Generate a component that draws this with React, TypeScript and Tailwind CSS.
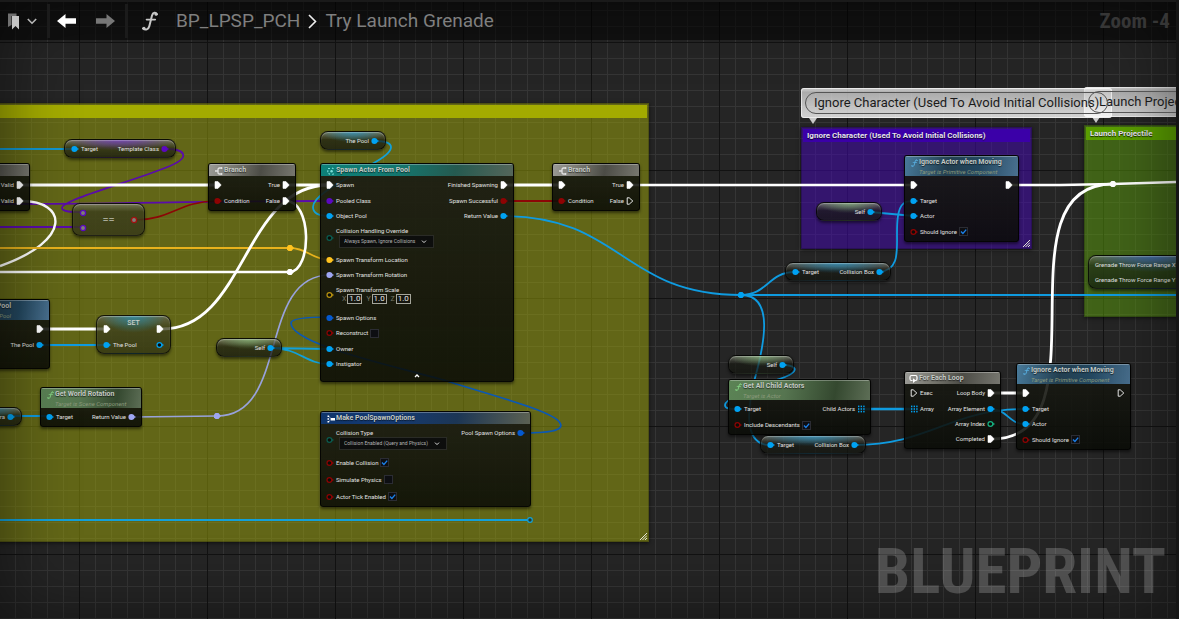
import React, { useId } from "react";

type Kind = "exec" | "execEmpty" | "data" | "ring" | "array" | "circle";

const BLUE = "text-[#00a2f2]";
const RED = "text-[#8e0303]";
const PURPLE = "text-[#5b08c0]";
const WHITE = "text-white";
const GOLD = "text-[#ffc21f]";
const LAVENDER = "text-[#9ea6f2]";
const TEAL = "text-[#0b5c50]";
const NAVY = "text-[#0559cf]";

function PinShape({ kind, color }: { kind: Kind; color: string }) {
  return (
    <svg viewBox="0 0 8 8" className={`h-2 w-2 shrink-0 overflow-visible ${color}`} aria-hidden="true">
      {kind === "exec" && <path d="M1 0.6h3L7.2 4 4 7.4H1z" fill="currentColor" stroke="currentColor" strokeWidth="0.6" strokeLinejoin="round" />}
      {kind === "execEmpty" && <path d="M1.2 0.8h2L6.8 4 3.200 7.200h-2z" fill="none" stroke="currentColor" strokeWidth="0.9" strokeLinejoin="round" />}
      {kind === "data" && (
        <>
          <circle cx="3.400" cy="4" r="3" fill="currentColor" />
          <path d="M6.200 2.600 7.900 4 6.200 5.400z" fill="currentColor" />
        </>
      )}
      {kind === "ring" && (
        <>
          <circle cx="3.400" cy="4" r="2.400" fill="#0b0d08" stroke="currentColor" strokeWidth="1.200" />
          <path d="M6.200 2.600 7.900 4 6.200 5.400z" fill="currentColor" />
        </>
      )}
      {kind === "circle" && <circle cx="4" cy="4" r="2.600" fill="#807f78" stroke="currentColor" strokeWidth="1.300" />}
      {kind === "array" &&
        [1, 3.6, 6.2].map((x) =>
          [1.4, 4, 6.6].map((y) => <rect key={`${x}-${y}`} x={x} y={y - 0.8} width="1.400" height="1.600" fill="currentColor" />)
        )}
    </svg>
  );
}

interface PinProps {
  kind: Kind;
  color?: string;
  label?: string;
  out?: boolean;
  size?: string;
  children?: React.ReactNode;
}

function Pin({ kind, color = WHITE, label, out, size = "h-4", children }: PinProps) {
  return (
    <div className={`flex items-center gap-0.5 whitespace-nowrap ${size} ${out ? "flex-row-reverse" : ""}`}>
      <PinShape kind={kind} color={color} />
      {label && <span>{label}</span>}
      {children}
    </div>
  );
}

function CheckPin({ label, on, size = "h-4" }: { label: string; on?: boolean; size?: string }) {
  const id = useId();
  return (
    <div className={`flex items-center gap-0.5 whitespace-nowrap ${size}`}>
      <PinShape kind="ring" color={RED} />
      <label htmlFor={id}>{label}</label>
      <span className="relative flex h-[9px] w-[9px]">
        <input id={id} type="checkbox" defaultChecked={on} className="peer h-full w-full appearance-none border border-[#2b2c33] bg-[#0d0e12]" />
        <svg viewBox="0 0 9 9" className="pointer-events-none absolute inset-0 hidden peer-checked:block" aria-hidden="true">
          <path d="M2 4.600 3.900 6.400 7.200 2.600" fill="none" stroke="#1b7fe8" strokeWidth="1.400" />
        </svg>
      </span>
    </div>
  );
}

function SelectPin({ label, value, width }: { label: string; value: string; width: string }) {
  const id = useId();
  return (
    <div className="flex h-[29px] items-center gap-0.5 whitespace-nowrap">
      <PinShape kind="ring" color={TEAL} />
      <div className="flex flex-col">
        <label htmlFor={id} className="leading-2">{label}</label>
        <span className={`relative ml-[3px] flex h-[13px] ${width}`}>
          <select id={id} className="h-full w-full appearance-none border border-[#2a2b26] bg-[#0d0e0d] pl-1 text-[5px] leading-[11px] text-[#b3b3b3]">
            <option>{value}</option>
          </select>
          <svg viewBox="0 0 8 8" className="pointer-events-none absolute top-[3px] right-1.5 h-2 w-2" aria-hidden="true">
            <path d="M2 2.600 4 4.600 6 2.600" fill="none" stroke="#ddd" strokeWidth="1" />
          </svg>
        </span>
      </div>
    </div>
  );
}

function VectorPin() {
  return (
    <div className="flex h-[29px] items-center gap-0.5 pb-1">
      <PinShape kind="ring" color="text-[#b8920f]" />
      <div className="flex flex-col">
        <span className="leading-2">Spawn Transform Scale</span>
        <span className="ml-1.5 flex gap-1">
          {["X", "Y", "Z"].map((axis) => (
            <label key={axis} className="flex items-center gap-px text-[7px] leading-[10px] text-[#77786a]">
              {axis}
              <input defaultValue="1.0" className="h-2.5 w-[15px] border border-[#a5a69b] bg-[#15160f] p-0 text-center text-[8px] leading-2 text-[#e6e6e6]" />
            </label>
          ))}
        </span>
      </div>
    </div>
  );
}

function FunctionGlyph({ className }: { className: string }) {
  return (
    <svg viewBox="0 0 16 20" className={className} aria-hidden="true">
      <path d="M15 3.200C13.800 1 10.900 1.300 10 4.600L7.300 15.200C6.500 18.400 3.500 19.600 1 17.500" fill="none" stroke="currentColor" strokeWidth="2" strokeLinecap="round" />
      <path d="M4.500 8.600h8.800" stroke="currentColor" strokeWidth="1.600" strokeLinecap="round" />
      <circle cx="14" cy="3.200" r="1.500" fill="currentColor" />
      <circle cx="2" cy="17.300" r="1.500" fill="currentColor" />
    </svg>
  );
}

function BranchGlyph() {
  return (
    <svg viewBox="0 0 8 8" className="h-2 w-2 shrink-0 text-[#e2e2e2]" aria-hidden="true">
      <path d="M0 4h3M7 1H4.500Q3 1 3 2.500v3Q3 7 4.500 7H7" fill="none" stroke="currentColor" strokeWidth="1.300" />
      <path d="M6 0 8 1 6 2.300zM6 5.700 8 7 6 8z" fill="currentColor" />
    </svg>
  );
}

function SpawnGlyph() {
  return (
    <svg viewBox="0 0 8 8" className="h-2 w-2 shrink-0 text-[#7fe0d8]" aria-hidden="true">
      <path d="M1 1.500h2M0.800 3.200v2M1.500 6.500l1.500.8M5 1l1.500.8M6.800 6.800l-1.500.6" stroke="currentColor" strokeWidth="1.100" />
      <circle cx="4.600" cy="4.200" r="1.200" fill="currentColor" />
    </svg>
  );
}

function MakeGlyph() {
  return (
    <svg viewBox="0 0 8 8" className="h-2 w-2 shrink-0 text-white" aria-hidden="true">
      <path d="M0.500 0.500h1.600v1.600H0.500zM0.500 3.200h1.600v1.600H0.500zM0.500 6h1.600v1.600H0.500zM4 3h4v2.400H4z" fill="currentColor" />
      <path d="M2 1.300 4 4 2 6.800" fill="none" stroke="currentColor" strokeWidth="0.500" />
    </svg>
  );
}

function LoopGlyph() {
  return (
    <svg viewBox="0 0 9 9" className="h-[9px] w-[9px] shrink-0 text-white" aria-hidden="true">
      <path d="M3.500 6.500H2.500Q1 6.500 1 5V3Q1 1.500 2.500 1.500h4Q8 1.500 8 3v2q0 1.500-1.500 1.500H5.500" fill="none" stroke="currentColor" strokeWidth="1.200" />
      <path d="M4 4.200 7 6.500 4 8.900z" fill="currentColor" />
    </svg>
  );
}

const HEAD = {
  gray: "bg-[linear-gradient(100deg,#9a9a96_0%,#77776f_30%,#4c4c46_60%,#77776f_100%)]",
  green: "bg-[linear-gradient(100deg,#5b8355_0%,#567550_40%,#34482f_75%,#5d6e56_100%)]",
  blue: "bg-[linear-gradient(100deg,#487a9a_0%,#233f50_38%,#23475f_65%,#4a7190_100%)]",
  teal: "bg-[linear-gradient(100deg,#0d8078_0%,#14776f_40%,#255a50_70%,#55665a_100%)]",
  navy: "bg-[linear-gradient(100deg,#0f356c_0%,#153a72_35%,#1c3655_65%,#5c6152_100%)]",
};

interface NodeProps {
  at: string;
  head: keyof typeof HEAD;
  title?: string;
  subtitle?: string;
  glyph?: React.ReactNode;
  headClass?: string;
  foot?: React.ReactNode;
  inputs?: React.ReactNode;
  outputs?: React.ReactNode;
}

function GraphNode({ at, head, title, subtitle, glyph, headClass = "pl-1.5", foot, inputs, outputs }: NodeProps) {
  return (
    <section className={`absolute overflow-hidden rounded-[3px] border border-black/80 bg-[linear-gradient(to_bottom,rgba(26,27,20,.9),rgba(10,12,7,.88))] shadow-[0_2px_3px_rgba(0,0,0,.5)] ${at}`}>
      <header className={`flex flex-col border-t border-white/30 ${subtitle ? "h-5" : "h-3"} ${HEAD[head]} ${headClass}`}>
        <div className="flex items-center gap-px">
          {glyph}
          <h2 className="text-[7px] leading-[11px] font-bold whitespace-nowrap text-[#c4c9c4] [text-shadow:0_1px_1px_rgba(0,0,0,.6)]">{title}</h2>
        </div>
        {subtitle && <p className="pl-2 text-[6px] leading-2 whitespace-nowrap text-[#8b9a7c] italic">{subtitle}</p>}
      </header>
      <div className="flex justify-between px-[5px] py-px">
        <div>{inputs}</div>
        <div>{outputs}</div>
      </div>
      {foot}
    </section>
  );
}

const GLOW = {
  blue: "bg-[radial-gradient(ellipse_50%_60%_at_50%_0%,rgba(40,150,200,.75),transparent),linear-gradient(to_bottom,rgba(120,122,110,.75),rgba(25,27,20,.7)_45%,rgba(20,22,16,.75))]",
  green: "bg-[radial-gradient(ellipse_50%_60%_at_50%_0%,rgba(140,200,130,.6),transparent),linear-gradient(to_bottom,rgba(120,122,110,.75),rgba(25,27,20,.7)_45%,rgba(20,22,16,.75))]",
  purple: "bg-[radial-gradient(ellipse_50%_60%_at_50%_0%,rgba(110,50,200,.75),transparent),linear-gradient(to_bottom,rgba(120,122,110,.75),rgba(45,47,25,.75)_45%,rgba(20,22,16,.75))]",
  navy: "bg-[radial-gradient(ellipse_50%_50%_at_50%_0%,rgba(50,100,190,.75),transparent),linear-gradient(to_bottom,rgba(120,122,110,.6),rgba(35,50,25,.7)_30%,rgba(20,32,16,.75))]",
  none: "bg-[linear-gradient(to_bottom,rgba(120,122,100,.75),rgba(58,60,28,.8)_25%,rgba(55,57,25,.85))]",
};

function Pill({ at, glow, children }: { at: string; glow: keyof typeof GLOW; children: React.ReactNode }) {
  return (
    <section className={`absolute flex items-center rounded-lg border border-black/70 px-1.5 shadow-[0_2px_3px_rgba(0,0,0,.5),inset_0_1px_1px_rgba(255,255,255,.3)] ${GLOW[glow]} ${at}`}>
      {children}
    </section>
  );
}

function Grip() {
  return (
    <svg viewBox="0 0 8 8" className="absolute right-px bottom-px h-2 w-2" aria-hidden="true">
      <path d="M1 8 8 1M3.500 8 8 3.500M6 8 8 6" stroke="#e6e6d8" strokeWidth="1" />
    </svg>
  );
}

interface CommentProps {
  at: string;
  body: string;
  bar: string;
  title?: string;
  grip?: boolean;
}

function CommentBox({ at, body, bar, title, grip }: CommentProps) {
  return (
    <section className={`absolute border border-black/20 p-px shadow-[0_1px_4px_rgba(0,0,0,.6)] ${body} ${at}`}>
      <h2 className={`h-[13px] overflow-hidden pl-1 text-[8px] leading-[14px] font-bold whitespace-nowrap text-[#e4e0ee] [text-shadow:0_1px_1px_rgba(0,0,0,.8)] ${bar}`}>{title}</h2>
      {grip && <Grip />}
    </section>
  );
}

function Bubble({ at, pad = "px-2", children }: { at: string; pad?: string; children: React.ReactNode }) {
  return (
    <div className={`absolute ${at}`}>
      <div className="rounded-[3px] bg-[linear-gradient(to_bottom,rgba(245,245,245,.8),rgba(205,205,205,.8)_15%,rgba(250,250,250,.8)_90%)] p-1 shadow-[inset_0_0_0_1px_rgba(255,255,255,.6)]">
        <p className={`relative z-10 h-[22px] rounded-full border border-[#555] text-[13px] leading-5 whitespace-nowrap text-[#1b1b1b] ${pad}`}>{children}</p>
      </div>
      <svg viewBox="0 0 8 6" className="ml-2 block h-1.5 w-2" aria-hidden="true">
        <path d="M0 0h8L4 6z" fill="#c9c9c9" />
      </svg>
    </div>
  );
}

const WIRES: { d: string; color: string; w?: number }[] = [
  { d: "M0 149H74", color: "#1296cf" },
  { d: "M166 149C184 149 194 157 165 168C130 182 62 200 62 208C62 212 72 212 82 212", color: "#5a0bab" },
  { d: "M0 204C120 204 200 201 330 201", color: "#5a0bab" },
  { d: "M0 227H82", color: "#5a0bab" },
  { d: "M135 220C170 220 180 201 217 201", color: "#8c0606", w: 1.6 },
  { d: "M22 201C66 201 74 240 0 266", color: "#fff", w: 2.4 },
  { d: "M22 185H217", color: "#fff", w: 2.8 },
  { d: "M0 248H290C308 248 312 260 330 260", color: "#e8b21c" },
  { d: "M0 272H290C312 270 312 201 286 201", color: "#fff", w: 2.6 },
  { d: "M286 185H329", color: "#fff", w: 2.8 },
  { d: "M162 329C246 329 243 185 329 185", color: "#fff", w: 2.8 },
  { d: "M42 329H107", color: "#fff", w: 2.8 },
  { d: "M40 345H107", color: "#0f9be0" },
  { d: "M12 416H50", color: "#0f9be0" },
  { d: "M132 417L217 416C290 416 257 275 330 275", color: "#98a2dc", w: 1.6 },
  { d: "M270 348L329 349M270 348C300 348 305 364 329 364", color: "#12a0d8" },
  { d: "M374 141C396 141 398 150 372 164C345 180 313 195 313 207C313 214 320 216 329 216", color: "#12a0d8" },
  { d: "M520 433C548 433 565 431 560 423C554 411 490 395 447 381C400 367 291 345 291 323C291 318 310 317 329 317", color: "#0b58b4", w: 1.7 },
  { d: "M0 520H529", color: "#12a0d8", w: 1.8 },
  { d: "M507 185H561", color: "#fff", w: 2.8 },
  { d: "M503 201H561", color: "#8c0606" },
  { d: "M503 216C622 216 622 295 741 295H1176", color: "#0f9be0", w: 1.8 },
  { d: "M632 185H913M1010 185H1060L1113 184L1176 182", color: "#fff", w: 2.6 },
  { d: "M741 295C768 295 768 272 795 272", color: "#0f9be0", w: 1.8 },
  { d: "M741 295C775 295 764 345 755 378C748 405 742 445 770 445", color: "#0f9be0" },
  { d: "M781 365C800 365 800 373 776 380C755 388 725 398 725 405C725 409 730 409 738 409", color: "#0f9be0" },
  { d: "M879 272C905 270 894 240 898 216C900 203 905 201 914 201", color: "#0f9be0", w: 1.8 },
  { d: "M870 212L914 216", color: "#0f9be0" },
  { d: "M862 409H912", color: "#0f9be0", w: 2.4 },
  { d: "M854 445C930 445 950 409 1025 409", color: "#0f9be0" },
  { d: "M990 409C1008 409 1008 424 1025 424", color: "#0f9be0" },
  { d: "M992 393H1025", color: "#fff", w: 2.8 },
  { d: "M992 439C1110 439 994 184 1113 184", color: "#fff", w: 2.8 },
];

const KNOTS = [
  { x: 290, y: 248, color: "#ffc21f" },
  { x: 290, y: 272, color: "#fff" },
  { x: 217, y: 416, color: "#9ea6f2" },
  { x: 741, y: 295, color: "#00a2f2" },
  { x: 1113, y: 184, color: "#fff" },
];

function Wires() {
  return (
    <svg viewBox="0 0 1179 619" className="absolute top-0 left-0 h-[619px] w-[1179px] max-w-none" aria-hidden="true">
      {WIRES.map((wire) => (
        <path key={wire.d} d={wire.d} fill="none" stroke={wire.color} strokeWidth={wire.w ?? 1.8} />
      ))}
      {KNOTS.map((k) => (
        <path key={`${k.x}-${k.y}`} d={`M${k.x - 3} ${k.y - 1.500}l1.500-1.500h3l2.500 3-2.500 3h-3l-1.500-1.500z`} fill={k.color} />
      ))}
      <circle cx="530" cy="520" r="2.300" fill="#273a2a" stroke="#12a0d8" strokeWidth="1.200" />
    </svg>
  );
}

function IgnoreActor({ at, wired }: { at: string; wired?: boolean }) {
  return (
    <GraphNode
      at={at}
      head="blue"
      title="Ignore Actor when Moving"
      subtitle="Target is Primitive Component"
      glyph={<FunctionGlyph className="h-2 w-[7px] text-[#5cb8ec]" />}
      inputs={
        <>
          <Pin kind="exec" />
          <Pin kind="data" color={BLUE} label="Target" />
          <Pin kind="data" color={BLUE} label="Actor" size="h-3.5" />
          <CheckPin label="Should Ignore" on size="h-[17px]" />
        </>
      }
      outputs={<Pin kind={wired ? "exec" : "execEmpty"} out />}
    />
  );
}

function Branch({ at, falseWired }: { at: string; falseWired?: boolean }) {
  return (
    <GraphNode
      at={at}
      head="gray"
      title="Branch"
      glyph={<BranchGlyph />}
      inputs={
        <>
          <Pin kind="exec" />
          <Pin kind="data" color={RED} label="Condition" />
        </>
      }
      outputs={
        <>
          <Pin kind="exec" out label="True" />
          <Pin kind={falseWired ? "exec" : "execEmpty"} out label="False" />
        </>
      }
    />
  );
}

function SelfPill({ at }: { at: string }) {
  return (
    <Pill at={`h-[19px] w-[66px] justify-end ${at}`} glow="green">
      <Pin kind="data" color={BLUE} label="Self" out />
    </Pill>
  );
}

function CollisionBoxPill({ at }: { at: string }) {
  return (
    <Pill at={`h-[19px] w-[106px] justify-between ${at}`} glow="blue">
      <Pin kind="data" color={BLUE} label="Target" />
      <Pin kind="data" color={BLUE} label="Collision Box" out />
    </Pill>
  );
}

function Graph() {
  return (
    <div className="absolute inset-0 overflow-hidden bg-[#252525] bg-[linear-gradient(to_right,#121212_1px,transparent_1px),linear-gradient(to_bottom,#121212_1px,transparent_1px),linear-gradient(to_right,#353535_1px,transparent_1px),linear-gradient(to_bottom,#353535_1px,transparent_1px)] bg-[size:128px_128px,128px_128px,16px_16px,16px_16px] bg-[position:79px_0,0_42px,15px_0,0_10px] text-[6px] leading-2 text-[#e2e2e2]">
      <CommentBox at="-left-5 top-[103px] h-[439px] w-[669px]" body="bg-[rgba(160,168,10,.5)]" bar="bg-[#a3ab00]" grip />
      <CommentBox at="left-[801px] top-[127px] h-[122px] w-[231px]" body="bg-[rgba(66,10,172,.55)]" bar="bg-[#3b00a8]" title="Ignore Character (Used To Avoid Initial Collisions)" grip />
      <CommentBox at="left-[1084px] top-[125px] h-[192px] w-[231px]" body="bg-[rgba(94,162,12,.5)]" bar="bg-[#5a9e00]" title="Launch Projectile" />
      <Wires />

      <GraphNode
        at="-left-16 top-[163px] w-[94px]"
        head="gray"
        outputs={
          <>
            <Pin kind="exec" out label="Valid" />
            <Pin kind="exec" out label="Valid" />
          </>
        }
      />
      <Pill at="left-[64px] top-[139px] h-[19px] w-28 justify-between" glow="purple">
        <Pin kind="data" color={BLUE} label="Target" />
        <Pin kind="data" color={PURPLE} label="Template Class" out />
      </Pill>
      <Pill at="left-[72px] top-[203px] h-[33px] w-[73px] justify-between" glow="none">
        <div>
          <Pin kind="circle" color={PURPLE} />
          <Pin kind="circle" color={PURPLE} size="h-3.5" />
        </div>
        <span className="text-[11px] leading-3 text-[#a9aa98]">==</span>
        <Pin kind="circle" color="text-[#a31010]" />
      </Pill>
      <Branch at="left-[208px] top-[163px] w-[88px]" falseWired />
      <Pill at="left-[320px] top-[131px] h-[19px] w-[66px] justify-end" glow="blue">
        <Pin kind="data" color={BLUE} label="The Pool" out />
      </Pill>

      <GraphNode
        at="-left-10 top-[299px] w-[90px] pb-3.5"
        head="blue"
        title="Pool"
        subtitle="The Pool"
        headClass="pr-[38px] items-end"
        outputs={
          <>
            <Pin kind="exec" out />
            <Pin kind="data" color={BLUE} label="The Pool" out />
          </>
        }
      />
      <section className="absolute left-[96px] top-[315px] h-[39px] w-[75px] rounded-lg border border-black/70 bg-[radial-gradient(ellipse_45%_45%_at_50%_0%,rgba(40,140,170,.8),transparent),linear-gradient(to_bottom,rgba(100,102,80,.8),rgba(60,62,30,.75)_30%,rgba(50,52,20,.8))] px-1.5 shadow-[0_2px_3px_rgba(0,0,0,.5),inset_0_1px_1px_rgba(255,255,255,.35)]">
        <div className="flex justify-between pt-[5px]">
          <div>
            <Pin kind="exec" />
            <Pin kind="data" color={BLUE} label="The Pool" />
          </div>
          <div>
            <Pin kind="exec" out />
            <Pin kind="ring" color={BLUE} out />
          </div>
        </div>
        <h2 className="absolute inset-x-0 top-[3px] text-center text-[7px] leading-[9px] font-medium text-[#c9cfc9]">SET</h2>
      </section>
      <SelfPill at="left-[216px] top-[338px]" />
      <Pill at="-left-10 top-[407px] h-[19px] w-[62px] justify-end" glow="blue">
        <Pin kind="data" color={BLUE} label="Camera" out />
      </Pill>
      <GraphNode
        at="left-[40px] top-[387px] w-[102px]"
        head="green"
        title="Get World Rotation"
        subtitle="Target is Scene Component"
        glyph={<FunctionGlyph className="h-2 w-[7px] text-[#8be08a]" />}
        inputs={<Pin kind="data" color={BLUE} label="Target" />}
        outputs={<Pin kind="data" color={LAVENDER} label="Return Value" out />}
      />

      <GraphNode
        at="left-[320px] top-[163px] w-[194px]"
        head="teal"
        title="Spawn Actor From Pool"
        glyph={<SpawnGlyph />}
        inputs={
          <>
            <Pin kind="exec" label="Spawn" />
            <Pin kind="data" color={PURPLE} label="Pooled Class" />
            <Pin kind="data" color={BLUE} label="Object Pool" size="h-3.5" />
            <SelectPin label="Collision Handling Override" value="Always Spawn, Ignore Collisions" width="w-[95px]" />
            <Pin kind="data" color={GOLD} label="Spawn Transform Location" />
            <Pin kind="data" color={LAVENDER} label="Spawn Transform Rotation" size="h-3.5" />
            <VectorPin />
            <Pin kind="data" color={NAVY} label="Spawn Options" size="h-3.5" />
            <CheckPin label="Reconstruct" />
            <Pin kind="data" color={BLUE} label="Owner" />
            <Pin kind="data" color={BLUE} label="Instigator" size="h-3.5" />
          </>
        }
        outputs={
          <>
            <Pin kind="exec" label="Finished Spawning" out />
            <Pin kind="data" color={RED} label="Spawn Successful" out />
            <Pin kind="data" color={BLUE} label="Return Value" size="h-3.5" out />
          </>
        }
        foot={
          <button aria-label="Collapse" className="flex h-[9px] w-full justify-center">
            <svg viewBox="0 0 8 8" className="h-2 w-2" aria-hidden="true">
              <path d="M2 5 4 3 6 5" fill="none" stroke="#fff" strokeWidth="1.300" />
            </svg>
          </button>
        }
      />
      <Branch at="left-[552px] top-[163px] w-[88px]" />
      <GraphNode
        at="left-[320px] top-[411px] w-[211px]"
        head="navy"
        title="Make PoolSpawnOptions"
        glyph={<MakeGlyph />}
        inputs={
          <>
            <SelectPin label="Collision Type" value="Collision Enabled (Query and Physics)" width="w-[108px]" />
            <CheckPin label="Enable Collision" on size="h-[17px]" />
            <CheckPin label="Simulate Physics" size="h-[17px]" />
            <CheckPin label="Actor Tick Enabled" on size="h-[17px]" />
          </>
        }
        outputs={<Pin kind="data" color={NAVY} label="Pool Spawn Options" out />}
      />

      <IgnoreActor at="left-[904px] top-[155px] w-[115px]" wired />
      <SelfPill at="left-[816px] top-[202px]" />
      <CollisionBoxPill at="left-[785px] top-[262px]" />
      <Pill at="left-[1088px] top-[255px] h-[34px] w-[130px]" glow="navy">
        <div className="whitespace-nowrap">
          <div className="flex h-4 items-center">Grenade Throw Force Range X</div>
          <div className="flex h-3.5 items-center">Grenade Throw Force Range Y</div>
        </div>
      </Pill>

      <SelfPill at="left-[728px] top-[355px]" />
      <GraphNode
        at="left-[728px] top-[379px] w-[143px]"
        head="green"
        title="Get All Child Actors"
        subtitle="Target is Actor"
        glyph={<FunctionGlyph className="h-2 w-[7px] text-[#8be08a]" />}
        inputs={
          <>
            <Pin kind="data" color={BLUE} label="Target" />
            <CheckPin label="Include Descendants" on />
          </>
        }
        outputs={<Pin kind="array" color={BLUE} label="Child Actors" out />}
      />
      <CollisionBoxPill at="left-[760px] top-[435px]" />
      <GraphNode
        at="left-[904px] top-[371px] w-[97px]"
        head="gray"
        title="For Each Loop"
        headClass="pl-1"
        glyph={<LoopGlyph />}
        inputs={
          <>
            <Pin kind="execEmpty" label="Exec" />
            <Pin kind="array" color={BLUE} label="Array" />
          </>
        }
        outputs={
          <>
            <Pin kind="exec" label="Loop Body" out />
            <Pin kind="data" color={BLUE} label="Array Element" out />
            <Pin kind="ring" color="text-[#16b583]" label="Array Index" size="h-3.5" out />
            <Pin kind="exec" label="Completed" out />
          </>
        }
      />
      <IgnoreActor at="left-[1016px] top-[363px] w-[115px]" />

      <Bubble at="left-[1084px] top-[87px]" pad="pl-2.5 pr-2">Launch Projectile</Bubble>
      <Bubble at="left-[801px] top-[88px]">Ignore Character (Used To Avoid Initial Collisions)</Bubble>

      <div className="pointer-events-none absolute inset-0 shadow-[inset_0_0_70px_rgba(0,0,0,.5)]" />
      <p className="absolute right-2.5 bottom-4 font-['Roboto_Condensed','Liberation_Sans_Narrow',Roboto,sans-serif] text-[63px] leading-none font-bold text-white/20">BLUEPRINT</p>
    </div>
  );
}

function TopBar() {
  return (
    <header className="relative mt-0.5 flex h-[38px] items-center bg-black/55">
      <button aria-label="Bookmarks" className="flex h-full w-[47px] items-center gap-2 pl-2">
        <svg viewBox="0 0 11 17" className="h-[17px] w-[11px]" aria-hidden="true">
          <path d="M0 0.500h8.500V3H3.500v9L0 14z" fill="#707070" />
          <path d="M4 3h7v13.500L7.500 13 4 16.500z" fill="#c4c4c4" />
        </svg>
        <svg viewBox="0 0 10 7" className="h-[7px] w-2.5" aria-hidden="true">
          <path d="M0.800 1 5 5.200 9.200 1" fill="none" stroke="#b8b8b8" strokeWidth="1.600" />
        </svg>
      </button>
      <span className="h-[34px] w-[3px] bg-[#1b1b1b]" />
      <nav aria-label="History" className="flex w-[75px] items-center gap-5 pl-[7px]">
        <button aria-label="Back">
          <svg viewBox="0 0 19 14" className="block h-3.5 w-[19px]" aria-hidden="true">
            <path d="M0 7 8.500 0v4.300H19v5.400H8.500V14z" fill="#fff" />
          </svg>
        </button>
        <button aria-label="Forward">
          <svg viewBox="0 0 19 14" className="block h-3.5 w-[19px]" aria-hidden="true">
            <path d="M19 7 10.500 0v4.300H0v5.400h10.500V14z" fill="#777" />
          </svg>
        </button>
      </nav>
      <span className="h-[34px] w-[3px] bg-[#1b1b1b]" />
      <nav aria-label="Breadcrumb" className="flex items-center pl-3.5 text-[19px] leading-6 text-[#7f7f7f]">
        <FunctionGlyph className="h-5 w-4 text-[#c8c8c8]" />
        <a href="#blueprint" className="ml-[18px]">BP_LPSP_PCH</a>
        <svg viewBox="0 0 9 15" className="mx-2 h-[15px] w-[9px]" aria-hidden="true">
          <path d="M1 1 7.500 7.500 1 14" fill="none" stroke="#eee" strokeWidth="1.600" />
        </svg>
        <a href="#function">Try Launch Grenade</a>
      </nav>
      <p className="ml-auto pr-1.5 font-['Roboto_Condensed','Liberation_Sans_Narrow',Roboto,sans-serif] text-[21px] leading-6 font-bold text-[#363636]">Zoom -4</p>
    </header>
  );
}

export default function App() {
  return (
    <div className="flex min-h-screen overflow-hidden bg-[#151515] font-[Roboto,sans-serif]">
      <main className="relative min-w-0 flex-1 overflow-hidden">
        <div className="absolute inset-0">
          <Graph />
        </div>
        <div className="relative border-t-2 border-[#1a1a1a]">
          <div className="-mt-0.5">
            <TopBar />
          </div>
        </div>
      </main>
      <aside className="w-[3px] shrink-0 bg-[#151515]" />
    </div>
  );
}
